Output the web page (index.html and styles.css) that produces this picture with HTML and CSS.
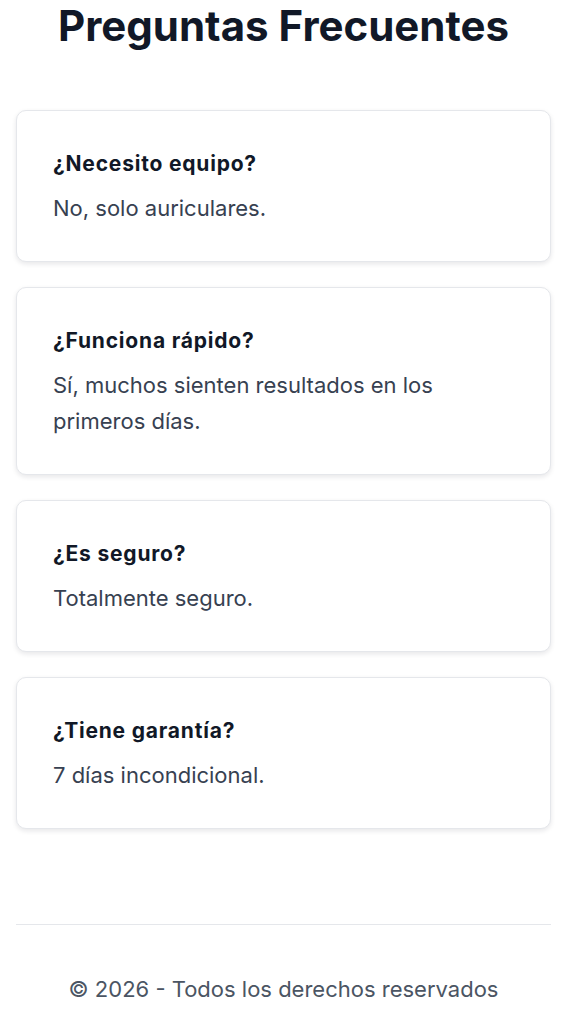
FILE: index.html
```html
<!DOCTYPE html>
<html lang="es">
<head>
    <meta charset="UTF-8">
    <meta name="viewport" content="width=device-width, initial-scale=1.0">
    <title>Preguntas Frecuentes</title>
    <link rel="stylesheet" href="styles.css">
</head>
<body>
    <section class="faq">
        <h1>Preguntas Frecuentes</h1>
        <div class="faq-list">
            <div class="faq-item">
                <h3>¿Necesito equipo?</h3>
                <p>No, solo auriculares.</p>
            </div>
            <div class="faq-item">
                <h3>¿Funciona rápido?</h3>
                <p>Sí, muchos sienten resultados en los primeros días.</p>
            </div>
            <div class="faq-item">
                <h3>¿Es seguro?</h3>
                <p>Totalmente seguro.</p>
            </div>
            <div class="faq-item">
                <h3>¿Tiene garantía?</h3>
                <p>7 días incondicional.</p>
            </div>
        </div>
    </section>
    <footer class="footer">
        <p>© 2026 - Todos los derechos reservados</p>
    </footer>
</body>
</html>
```

FILE: styles.css
```css
body {
    font-family: Inter, "Noto Sans", sans-serif;
    background-color: #ffffff;
    margin: 0;
    padding: 1px 13px 0 16px;
}
.faq h1 {
    margin: 0;
    font-size: 42px;
    line-height: 50px;
    font-weight: 700;
    text-align: center;
    color: #111827;
}
.faq-list {
    display: flex;
    flex-direction: column;
    gap: 25px;
    margin-top: 59px;
}
.faq-item {
    background-color: white;
    border: 1px solid #e5e7eb;
    border-radius: 10px;
    padding: 39px 36px 35px;
    box-shadow: 0 2px 5px rgba(17, 24, 39, 0.1);
}
.faq-item h3 {
    margin: 0 0 12px;
    font-size: 21px;
    line-height: 28px;
    font-weight: 700;
    letter-spacing: 0.8px;
    color: #111827;
}
.faq-item p {
    margin: 0;
    font-size: 22px;
    line-height: 36px;
    color: #374151;
}
.footer {
    margin-top: 95px;
    border-top: 1px solid #e5e7eb;
    padding-top: 50px;
    text-align: center;
}
.footer p {
    margin: 0;
    font-size: 22px;
    line-height: 28px;
    color: #4b5563;
}
```
